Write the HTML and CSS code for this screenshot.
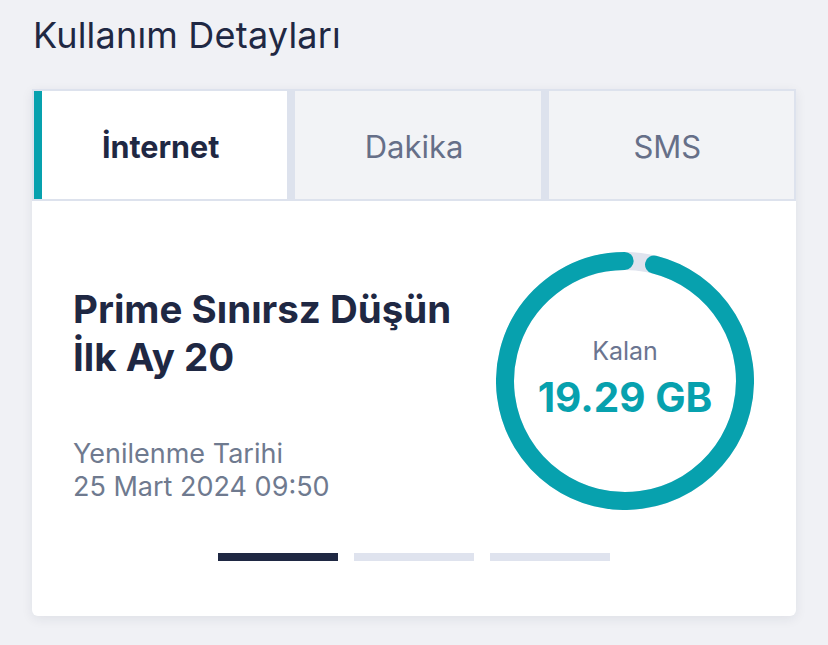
FILE: index.html
```html
<!DOCTYPE html>
<html lang="tr">
<head>
<meta charset="utf-8">
<link rel="stylesheet" href="styles.css">
</head>
<body>
<div class="page">
  <h1 class="title">Kullanım Detayları</h1>
  <div class="card">
    <div class="tabs">
      <div class="tab active">İnternet</div>
      <div class="tab">Dakika</div>
      <div class="tab">SMS</div>
    </div>
    <div class="panel">
      <div class="row">
        <div class="info">
          <div class="plan">Prime Sınırsz Düşün<br>İlk Ay 20</div>
          <div class="renew">Yenilenme Tarihi<br>25 Mart 2024 09:50</div>
        </div>
        <div class="gauge">
          <svg class="ring" width="258" height="258" viewBox="0 0 258 258">
            <circle cx="129" cy="129" r="120" fill="none" stroke="#dfe3ee" stroke-width="18"/>
            <circle cx="129" cy="129" r="120" fill="none" stroke="#07a1ae" stroke-width="18" stroke-linecap="round"
              stroke-dasharray="724 1000" stroke-dashoffset="0" transform="rotate(-76 129 129)"/>
          </svg>
          <div class="gauge-text">
            <div class="gauge-label">Kalan</div>
            <div class="gauge-value">19.29 GB</div>
          </div>
        </div>
      </div>
      <div class="dots">
        <span class="dot on"></span>
        <span class="dot"></span>
        <span class="dot"></span>
      </div>
    </div>
  </div>
</div>
</body>
</html>
```
FILE: styles.css
```css
* { box-sizing: border-box; }
html, body { margin: 0; padding: 0; }
body {
  background: #f0f1f5;
  font-family: Inter, Lato, sans-serif;
  color: #1f2843;
  width: 828px;
  height: 645px;
  overflow: hidden;
}
.page { padding: 0 32px; }
.title {
  margin: 13px 0 0 1px;
  font-size: 36px;
  line-height: 44px;
  font-weight: 400;
  letter-spacing: 0.2px;
  color: #1f2843;
}
.card {
  margin-top: 32px;
  background: #fff;
  border-radius: 0 0 6px 6px;
  box-shadow: 0 3px 12px rgba(30, 40, 70, 0.08);
}
.tabs {
  display: flex;
  gap: 8px;
  background: #dde2ed;
  border: 2px solid #dde2ed;
}
.tab {
  box-sizing: content-box;
  flex: 1 1 0;
  height: 106px;
  padding: 2px 8px 0 0;
  display: flex;
  align-items: center;
  justify-content: center;
  background: #f2f3f6;
  font-size: 31px;
  color: #666f88;
}
.tab.active {
  background: #fff;
  border-left: 8px solid #07a1ae;
  color: #1f2843;
  font-weight: 700;
  font-size: 30.5px;
}
.panel { padding: 51px 42px 55px 41px; }
.row {
  display: flex;
  justify-content: space-between;
  align-items: flex-start;
}
.info { margin-top: 33px; }
.plan {
  font-size: 38.5px;
  line-height: 48px;
  font-weight: 700;
  color: #1f2843;
}
.renew {
  margin-top: 56px;
  font-size: 27px;
  line-height: 33px;
  color: #6f7a8f;
}
.gauge {
  position: relative;
  width: 258px;
  height: 258px;
}
.ring { display: block; }
.gauge-text {
  position: absolute;
  inset: 0;
  display: flex;
  flex-direction: column;
  align-items: center;
  justify-content: center;
  padding-bottom: 4px;
}
.gauge-label {
  font-size: 25px;
  line-height: 30px;
  color: #6b7590;
}
.gauge-value {
  margin-top: 8px;
  font-size: 40.5px;
  line-height: 48px;
  font-weight: 700;
  color: #07a1ae;
}
.dots {
  margin-top: 43px;
  display: flex;
  justify-content: center;
  gap: 16px;
}
.dot {
  width: 120px;
  height: 8px;
  background: #dfe3ee;
}
.dot.on { background: #1f2843; }
```
